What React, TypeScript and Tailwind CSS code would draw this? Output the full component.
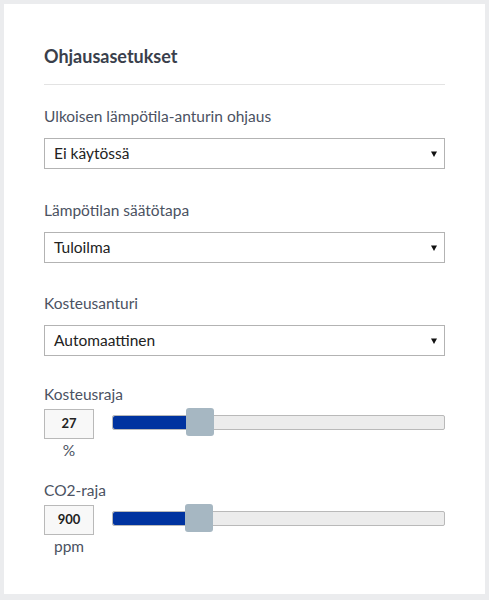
import React from "react";

const font = { fontFamily: "Lato, 'Noto Sans', sans-serif" };

function SelectBox({ value }: { value: string }) {
  return (
    <div className="mt-3 flex h-[31px] items-center justify-between border border-[#b3b3b3] bg-white pl-[9px] pr-[7px] text-[15.5px] text-[#222]">
      <span>{value}</span>
      <svg width="6" height="6" viewBox="0 0 6 6"><path d="M0 0.5h6L3 6z" fill="#111" /></svg>
    </div>
  );
}

function SliderRow({ label, value, unit, pct }: { label: string; value: string; unit: string; pct: number }) {
  return (
    <div>
      <div className="h-5 text-[15.5px] leading-5 text-[#4b5262]">{label}</div>
      <div className="mt-[5px] flex items-start">
        <div className="flex w-[50px] flex-col items-center">
          <div className="flex h-[30px] w-[50px] items-center justify-center border border-[#b9b9b9] bg-[#f8f8f8] text-[13px] font-bold text-[#222]">{value}</div>
          <div className="mt-[2px] text-[15.5px] leading-[18px] text-[#4b5262]">{unit}</div>
        </div>
        <div className="relative ml-[18px] mt-[6px] h-[15px] flex-1 rounded-[2px] border border-[#b9b9b9] bg-[#ececec]">
          <div className="absolute left-0 top-0 h-full rounded-l-[2px] bg-[#0033a0]" style={{ width: pct + "%" }} />
          <div className="absolute top-[-8px] h-[28px] w-[28px] rounded-[3px] bg-[#a6b7c2]" style={{ left: `calc(${pct}% - 2px)` }} />
        </div>
      </div>
    </div>
  );
}

export default function App() {
  return (
    <div className="min-h-[600px] bg-[#ebecee] p-1" style={font}>
      <div className="h-[590px] bg-white px-10 pt-[41px]">
        <div className="border-b border-[#e3e3e3] pb-[17px] text-[18px] font-bold leading-[22px] text-[#3a3f4c]">Ohjausasetukset</div>
        <div className="mt-[21px] h-5 text-[15.5px] leading-5 text-[#4b5262]">Ulkoisen lämpötila-anturin ohjaus</div>
        <SelectBox value="Ei käytössä" />
        <div className="mt-[31px] h-5 text-[15.5px] leading-5 text-[#4b5262]">Lämpötilan säätötapa</div>
        <SelectBox value="Tuloilma" />
        <div className="mt-[30px] h-5 text-[15.5px] leading-5 text-[#4b5262]">Kosteusanturi</div>
        <SelectBox value="Automaattinen" />
        <div className="mt-[28px]">
          <SliderRow label="Kosteusraja" value="27" unit="%" pct={22.7} />
        </div>
        <div className="mt-[21px]">
          <SliderRow label="CO2-raja" value="900" unit="ppm" pct={22.3} />
        </div>
      </div>
    </div>
  );
}
